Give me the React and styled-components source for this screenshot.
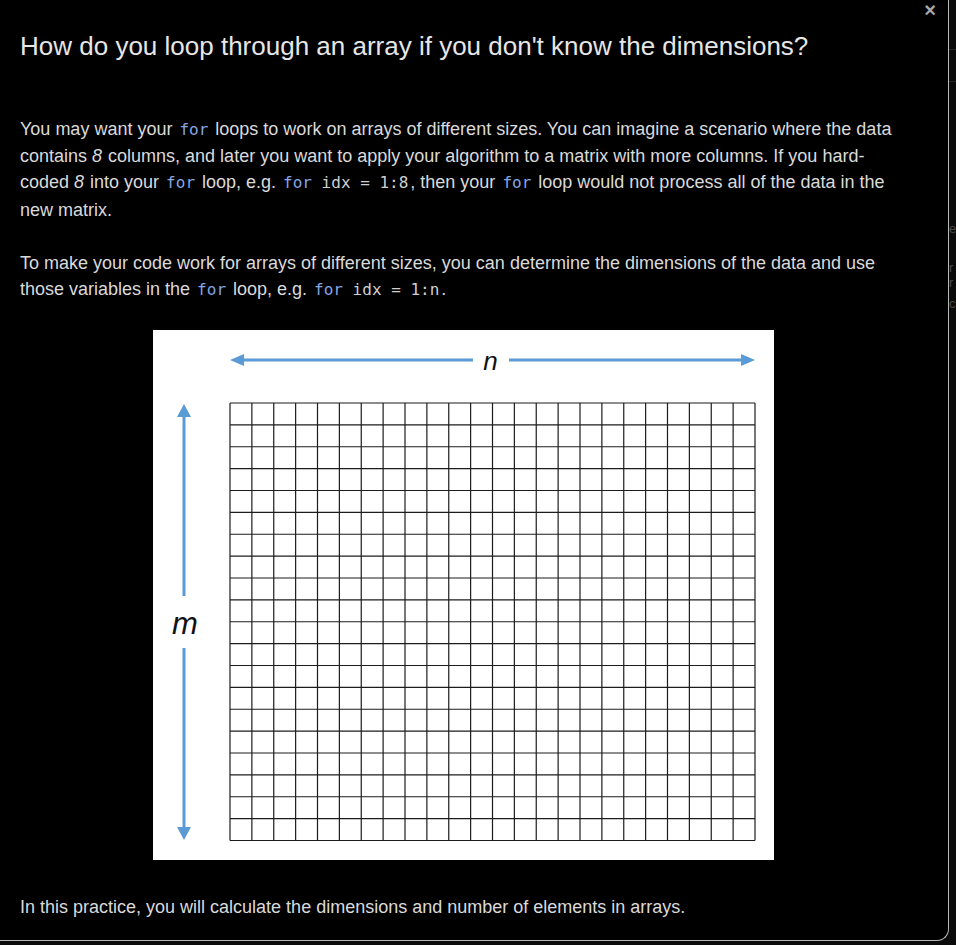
import React from 'react';
import styled, { createGlobalStyle } from 'styled-components';

const GlobalStyle = createGlobalStyle`
  html, body {
    margin: 0;
    padding: 0;
    background: #0b0b0b;
    overflow: hidden;
  }
  body {
    font-family: "Liberation Sans", Arial, sans-serif;
  }
`;

const Page = styled.div`
  display: flex;
  width: 956px;
  height: 945px;
  overflow: hidden;
`;

const Modal = styled.div`
  position: relative;
  box-sizing: border-box;
  flex-shrink: 0;
  width: 949px;
  height: 941px;
  padding: 30.5px 0 0 20px;
  background: #000;
  border-right: 1px solid #b8b8b8;
  border-bottom: 1px solid #b8b8b8;
  border-bottom-right-radius: 12px;
`;

const Close = styled.button`
  position: absolute;
  top: -2px;
  right: 12px;
  padding: 0;
  border: 0;
  background: none;
  color: #a8a8a8;
  font-family: "Liberation Sans", Arial, sans-serif;
  font-size: 20px;
  font-weight: bold;
  line-height: 24px;
  cursor: pointer;
`;

const Body = styled.div`
  width: 887px;
`;

const Title = styled.h2`
  margin: 0 0 55px;
  font-size: 26px;
  line-height: 30px;
  font-weight: normal;
  color: #e6e6e6;
`;

const Para = styled.p`
  margin: 0 0 26.4px;
  font-size: 18px;
  line-height: 26.4px;
  color: #dadada;
`;

const Em = styled.i`
  padding-right: 1px;
`;

const Code = styled.code`
  padding: 0 2px;
  font-family: "DejaVu Sans Mono", "Liberation Mono", monospace;
  font-size: 16px;
  color: #cfcfcf;
`;

const Kw = styled.span`
  color: #86a6e4;
`;

const Figure = styled.div`
  display: block;
  width: 621px;
  height: 530px;
  margin: 26px auto 34.5px;
  background: #fff;

  svg {
    display: block;
  }
`;

const Backdrop = styled.div`
  flex: 1;
  display: flex;
  flex-direction: column;
  overflow: hidden;
  padding-top: 49px;
`;

const BackdropRule = styled.div`
  height: 1px;
  margin-bottom: ${p => p.$after}px;
  background: #262626;
`;

const BackdropGlyph = styled.span`
  display: block;
  margin-top: ${p => p.$top}px;
  font-family: "Liberation Sans", Arial, sans-serif;
  font-size: 13px;
  line-height: 14px;
  color: #4a4a4a;
`;

const ARROW = '#5b9bd5';
const COLS = 24;
const ROWS = 20;
const X0 = 77;
const Y0 = 73;
const CELL = 21.875;

function MatrixDiagram() {
  const lines = [];
  for (let i = 0; i <= COLS; i++) {
    const x = X0 + i * CELL;
    lines.push(<line key={'c' + i} x1={x} y1={Y0} x2={x} y2={Y0 + ROWS * CELL} />);
  }
  for (let j = 0; j <= ROWS; j++) {
    const y = Y0 + j * CELL;
    lines.push(<line key={'r' + j} x1={X0} y1={y} x2={X0 + COLS * CELL} y2={y} />);
  }

  return (
    <svg width="621" height="530" viewBox="0 0 621 530">
      <g stroke="#1c1c1c" strokeWidth="1.2">{lines}</g>

      <g stroke={ARROW} strokeWidth="3">
        <line x1="88" y1="30" x2="320" y2="30" />
        <line x1="356" y1="30" x2="591" y2="30" />
        <line x1="31" y1="85" x2="31" y2="266" />
        <line x1="31" y1="318" x2="31" y2="499" />
      </g>
      <g fill={ARROW}>
        <polygon points="77,30 91,24 91,36" />
        <polygon points="602,30 588,24 588,36" />
        <polygon points="31,74 24,87 38,87" />
        <polygon points="31,510 24,497 38,497" />
      </g>

      <text x="337.5" y="40" textAnchor="middle" fontFamily="Liberation Sans, Arial, sans-serif"
        fontStyle="italic" fontSize="26" fill="#111">n</text>
      <text x="32" y="304" textAnchor="middle" fontFamily="Liberation Sans, Arial, sans-serif"
        fontStyle="italic" fontSize="31" fill="#111">m</text>
    </svg>
  );
}

export default function App() {
  return (
    <>
      <GlobalStyle />
      <Page>
        <Modal>
          <Close aria-label="Close">×</Close>
          <Body>
            <Title>How do you loop through an array if you don't know the dimensions?</Title>
            <Para>
              You may want your <Code><Kw>for</Kw></Code> loops to work on arrays of different sizes. You can
              imagine a scenario where the data contains <Em>8</Em> columns, and later you want to apply your
              algorithm to a matrix with more columns. If you hard-coded <Em>8</Em> into
              your <Code><Kw>for</Kw></Code> loop, e.g. <Code><Kw>for</Kw> idx = 1:8</Code>, then
              your <Code><Kw>for</Kw></Code> loop would not process all of the data in the new matrix.
            </Para>
            <Para>
              To make your code work for arrays of different sizes, you can determine the dimensions of the
              data and use those variables in the <Code><Kw>for</Kw></Code> loop,
              e.g. <Code><Kw>for</Kw> idx = 1:n</Code>.
            </Para>
            <Figure>
              <MatrixDiagram />
            </Figure>
            <Para>In this practice, you will calculate the dimensions and number of elements in arrays.</Para>
          </Body>
        </Modal>
        <Backdrop>
          <BackdropRule $after={31} />
          <BackdropRule $after={0} />
          <BackdropGlyph $top={140}>e</BackdropGlyph>
          <BackdropGlyph $top={25}>r</BackdropGlyph>
          <BackdropGlyph $top={1}>r</BackdropGlyph>
          <BackdropGlyph $top={7}>c</BackdropGlyph>
        </Backdrop>
      </Page>
    </>
  );
}
